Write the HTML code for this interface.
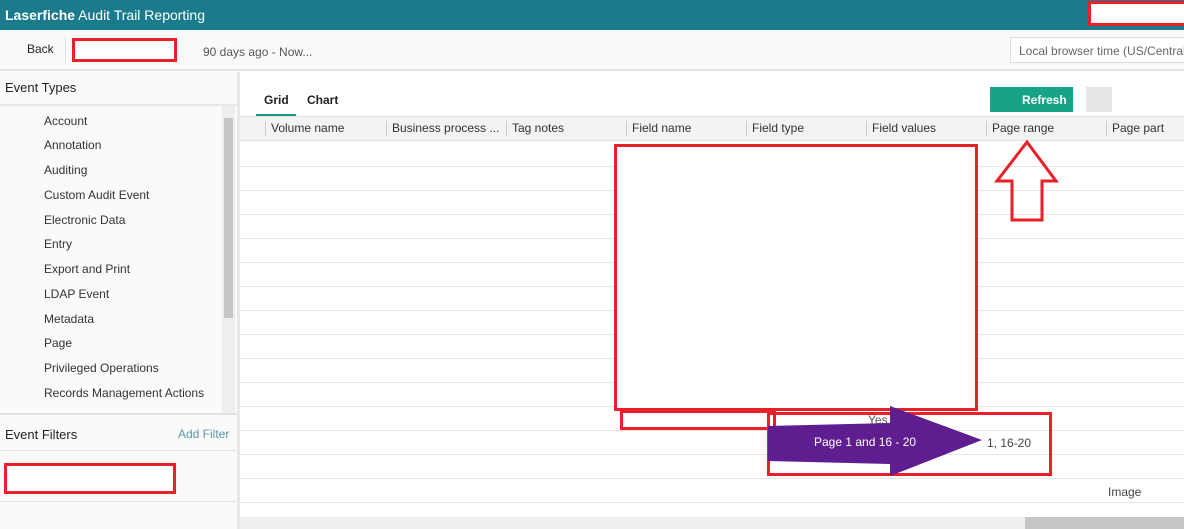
<!DOCTYPE html><html><head><style>
*{margin:0;padding:0;box-sizing:border-box}
body{width:1184px;height:529px;position:relative;overflow:hidden;background:#fff;font-family:"Liberation Sans",sans-serif;font-size:12px;color:#333}
.a{position:absolute;white-space:nowrap}
.hl{position:absolute;left:240px;width:944px;height:1px;background:#e6e6e6}
.red{position:absolute;border:3px solid #e8202a;background:#fff}
.et{position:absolute;left:44px;font-size:12px;color:#333}
.th{position:absolute;top:121px;font-size:12px;color:#333;border-left:1px solid #ccc;padding-left:5px;height:15px;line-height:15px}
</style></head><body>
<div class="a" style="left:0;top:0;width:1184px;height:30px;background:#1a7b8d"></div>
<div class="a" style="left:5px;top:7px;color:#fff;font-size:14px"><b>Laserfiche</b> Audit Trail Reporting</div>
<div class="red" style="left:1088px;top:1px;width:100px;height:25px"></div>
<div class="a" style="left:0;top:30px;width:1184px;height:41px;background:#fafafa;border-bottom:2px solid #e5e5e5"></div>
<div class="a" style="left:27px;top:42px;font-size:12px;color:#222">Back</div>
<div class="a" style="left:65px;top:37px;width:1px;height:26px;background:#ddd"></div>
<div class="red" style="left:72px;top:38px;width:105px;height:24px"></div>
<div class="a" style="left:203px;top:45px;color:#555">90 days ago - Now...</div>
<div class="a" style="left:1010px;top:37px;width:180px;height:26px;border:1px solid #ddd;background:#fff;color:#666;padding:6px 0 0 8px;overflow:hidden">Local browser time (US/Central)</div>
<div class="a" style="left:0;top:72px;width:237px;height:457px;background:#fafafa"></div>
<div class="a" style="left:237px;top:72px;width:3px;height:457px;background:#e8e8e8"></div>
<div class="a" style="left:5px;top:80px;font-size:13px;color:#222">Event Types</div>
<div class="a" style="left:0;top:104px;width:237px;height:2px;background:#e8e8e8"></div>
<div class="a" style="left:222px;top:106px;width:13px;height:307px;background:#eee"></div>
<div class="a" style="left:224px;top:118px;width:9px;height:200px;background:#c6c6c6"></div>
<div class="et" style="top:114px">Account</div>
<div class="et" style="top:138px">Annotation</div>
<div class="et" style="top:163px">Auditing</div>
<div class="et" style="top:188px">Custom Audit Event</div>
<div class="et" style="top:213px">Electronic Data</div>
<div class="et" style="top:237px">Entry</div>
<div class="et" style="top:262px">Export and Print</div>
<div class="et" style="top:287px">LDAP Event</div>
<div class="et" style="top:312px">Metadata</div>
<div class="et" style="top:336px">Page</div>
<div class="et" style="top:361px">Privileged Operations</div>
<div class="et" style="top:386px">Records Management Actions</div>
<div class="a" style="left:0;top:413px;width:237px;height:2px;background:#e2e2e2"></div>
<div class="a" style="left:5px;top:427px;font-size:13px;color:#222">Event Filters</div>
<div class="a" style="left:178px;top:427px;color:#5a9aa6">Add Filter</div>
<div class="a" style="left:0;top:450px;width:237px;height:1px;background:#e2e2e2"></div>
<div class="red" style="left:4px;top:463px;width:172px;height:31px"></div>
<div class="a" style="left:0;top:501px;width:237px;height:1px;background:#e2e2e2"></div>
<div class="a" style="left:264px;top:93px;font-weight:bold;color:#222">Grid</div>
<div class="a" style="left:307px;top:93px;font-weight:bold;color:#222">Chart</div>
<div class="a" style="left:256px;top:114px;width:40px;height:2px;background:#1a9a86"></div>
<div class="a" style="left:990px;top:87px;width:83px;height:25px;background:#16a386;color:#fff;font-weight:bold;padding:6px 0 0 32px">Refresh</div>
<div class="a" style="left:1086px;top:87px;width:26px;height:25px;background:#e6e6e6"></div>
<div class="a" style="left:240px;top:116px;width:944px;height:25px;background:#f3f3f3;border-top:1px solid #e0e0e0;border-bottom:1px solid #e0e0e0"></div>
<div class="th" style="left:265px">Volume name</div>
<div class="th" style="left:386px">Business process ...</div>
<div class="th" style="left:506px">Tag notes</div>
<div class="th" style="left:626px">Field name</div>
<div class="th" style="left:746px">Field type</div>
<div class="th" style="left:866px">Field values</div>
<div class="th" style="left:986px">Page range</div>
<div class="th" style="left:1106px">Page part</div>
<div class="hl" style="top:166px"></div><div class="hl" style="top:190px"></div><div class="hl" style="top:214px"></div><div class="hl" style="top:238px"></div><div class="hl" style="top:262px"></div><div class="hl" style="top:286px"></div><div class="hl" style="top:310px"></div><div class="hl" style="top:334px"></div><div class="hl" style="top:358px"></div><div class="hl" style="top:382px"></div><div class="hl" style="top:406px"></div><div class="hl" style="top:430px"></div><div class="hl" style="top:454px"></div><div class="hl" style="top:478px"></div><div class="hl" style="top:502px"></div>
<div class="a" style="left:240px;top:517px;width:944px;height:12px;background:#eee"></div>
<div class="a" style="left:1025px;top:517px;width:159px;height:12px;background:#c6c6c6"></div>
<div class="red" style="left:614px;top:144px;width:364px;height:267px"></div>
<div class="red" style="left:620px;top:410px;width:156px;height:20px"></div>
<div class="a" style="left:868px;top:413px;color:#555">Yes</div>
<div class="red" style="left:767px;top:412px;width:285px;height:64px;background:transparent"></div>
<svg class="a" style="left:0;top:0" width="1184" height="529">
<polygon points="768,426 890,423 890,406 982,440 890,476 890,464 768,461" fill="#5e1e8f"/>
<polygon points="1027,142 1056,181 1042,181 1042,220 1012,220 1012,181 997,181" fill="none" stroke="#e8202a" stroke-width="3"/>
</svg>
<div class="a" style="left:814px;top:435px;color:#fff;font-size:12px">Page 1 and 16 - 20</div>
<div class="a" style="left:987px;top:436px;color:#444">1, 16-20</div>
<div class="a" style="left:1108px;top:485px;color:#444">Image</div>
</body></html>
